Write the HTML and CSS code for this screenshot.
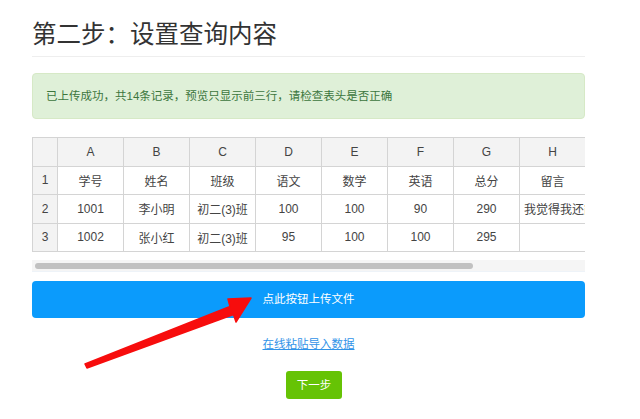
FILE: index.html
```html
<!DOCTYPE html>
<html>
<head>
  <meta charset="utf-8" />
  <meta name="viewport" content="width=device-width, initial-scale=1" />
  <title>设置查询内容</title>
<link rel="stylesheet" href="styles.css">
</head>
<body>
<div class="container">
  <h2 class="title">第二步：设置查询内容</h2>
  <div class="alert">已上传成功，共14条记录，预览只显示前三行，请检查表头是否正确</div>
  <div class="preview">
    <table>
      <tr class="head">
        <th class="idx"></th><th>A</th><th>B</th><th>C</th><th>D</th><th>E</th><th>F</th><th>G</th><th>H</th><th></th><th></th>
      </tr>
      <tr>
        <th class="idx">1</th><td>学号</td><td>姓名</td><td>班级</td><td>语文</td><td>数学</td><td>英语</td><td>总分</td><td>留言</td><td></td><td></td>
      </tr>
      <tr>
        <th class="idx">2</th><td>1001</td><td>李小明</td><td>初二(3)班</td><td>100</td><td>100</td><td>90</td><td>290</td><td class="long">我觉得我还能再考高一点</td><td></td><td></td>
      </tr>
      <tr>
        <th class="idx">3</th><td>1002</td><td>张小红</td><td>初二(3)班</td><td>95</td><td>100</td><td>100</td><td>295</td><td></td><td></td><td></td>
      </tr>
    </table>
  </div>
  <div class="scrollbar"><div class="thumb"></div></div>
  <a class="btn upload" href="#">点此按钮上传文件</a>
  <div class="paste"><a href="#">在线粘贴导入数据</a></div>
  <div class="next"><a class="btn green" href="#">下一步</a></div>
</div>
<svg class="arrow" width="640" height="419" viewBox="0 0 640 419">
  <polygon points="85,364 230,306.5 228,299 251,298 236,322 233.5,314.5 87,368" fill="#f70d0d" stroke="#f70d0d" stroke-width="1.5" stroke-linejoin="round"/>
</svg>
</body>
</html>
```

FILE: styles.css
```css
* {
  margin: 0;
  padding: 0;
  box-sizing: border-box;
}
body {
  font-family: "Liberation Sans", Arial, "Noto Sans CJK SC", sans-serif;
  color: #333;
  background: #fff;
  position: relative;
}
div.container {
  width: 553px;
  margin-left: 32px;
}
h2.title {
  font-weight: normal;
  font-size: 24.5px;
  line-height: 27px;
  margin-top: 21px;
  padding-bottom: 8px;
  border-bottom: 1px solid #eee;
  color: #333;
}
div.alert {
  margin-top: 16px;
  height: 46px;
  line-height: 44px;
  padding: 0 13px;
  font-size: 11.5px;
  color: #3c763d;
  background: #dff0d8;
  border: 1px solid #d6e9c6;
  border-radius: 4px;
}
div.preview {
  margin-top: 18px;
  overflow: hidden;
}
table {
  border-collapse: collapse;
  table-layout: fixed;
  width: 685px;
  font-size: 12px;
}
table th, table td {
  border: 1px solid #d4d4d4;
  height: 28.5px;
  width: 66px;
  text-align: center;
  font-weight: normal;
  white-space: nowrap;
  overflow: hidden;
  color: #444;
}
table th.idx {
  width: 25px;
  background: #f3f3f3;
}
table tr.head th {
  background: #f3f3f3;
}
table td.long {
  text-align: left;
  padding-left: 4px;
  text-overflow: clip;
}
div.scrollbar {
  margin-top: 8px;
  height: 12px;
  padding: 3px;
  background: #f5f5f5;
  border-bottom: 1px solid #eef3f8;
}
div.scrollbar .thumb {
  width: 438px;
  height: 6px;
  border-radius: 3px;
  background: #c1c1c1;
}
a.btn {
  display: block;
  text-decoration: none;
  color: #fff;
  text-align: center;
  font-size: 11.5px;
}
a.upload {
  margin-top: 9px;
  height: 37px;
  line-height: 37px;
  background: #0b9bfc;
  border-radius: 4px;
}
div.paste {
  margin-top: 18px;
  text-align: center;
  font-size: 11.5px;
  line-height: 16px;
}
div.paste a {
  color: #3193e8;
  text-decoration: underline;
}
div.next {
  margin-top: 19px;
  display: flex;
  justify-content: center;
  padding-left: 11px;
}
a.green {
  width: 56px;
  height: 28px;
  line-height: 28px;
  background: #66c305;
  border-radius: 3px;
}
svg.arrow {
  position: absolute;
  left: 0;
  top: 0;
  pointer-events: none;
}
```
